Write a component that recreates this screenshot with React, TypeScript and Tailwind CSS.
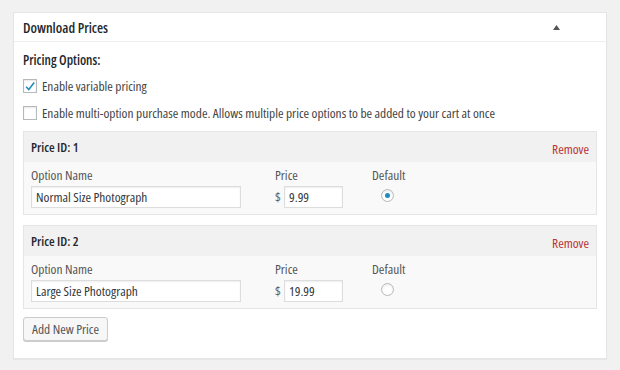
import React from "react"

const prices = [
  { id: 1, name: "Normal Size Photograph", amount: "9.99", isDefault: true },
  { id: 2, name: "Large Size Photograph", amount: "19.99", isDefault: false },
]

const Checkbox = ({ checked }: { checked: boolean }) => (
  <span className="flex h-[14px] w-[14px] shrink-0 items-center justify-center border border-[#b4b9be] bg-white shadow-[inset_0_1px_2px_rgba(0,0,0,0.1)]">
    {checked && (
      <svg width="13" height="13" viewBox="0 0 20 20">
        <path d="M3.5 10.5 L8 15 L17 3.5" fill="none" stroke="#1e8cbe" strokeWidth="2.6" />
      </svg>
    )}
  </span>
)

const PriceRow = ({ id, name, amount, isDefault }: (typeof prices)[number]) => (
  <div className="border border-[#e5e5e5]">
    <div className="flex h-[30px] items-center justify-between bg-[#f1f1f1] px-[7px]">
      <span className="text-[13px] font-semibold text-[#23282d]">Price ID: {id}</span>
      <span className="pt-[3px] text-[#b33]">Remove</span>
    </div>
    <div className="flex h-[52px] bg-[#f9f9f9] px-[7px] pt-[4px] text-[#555]">
      <div className="w-[243px]">
        <div className="h-[20px]">Option Name</div>
        <div className="flex h-[22px] w-[210px] items-center border border-[#ddd] bg-white px-[4px] text-[#32373c] shadow-[inset_0_1px_2px_rgba(0,0,0,0.07)]">
          {name}
        </div>
      </div>
      <div className="w-[98px]">
        <div className="h-[20px] pl-[1px]">Price</div>
        <div className="flex items-center">
          <span className="w-[10px] pl-[1px]">$</span>
          <div className="flex h-[22px] w-[59px] items-center border border-[#ddd] bg-white px-[4px] text-[#32373c] shadow-[inset_0_1px_2px_rgba(0,0,0,0.07)]">
            {amount}
          </div>
        </div>
      </div>
      <div>
        <div className="h-[20px]">Default</div>
        <span className="ml-[9px] mt-[3px] flex h-[13px] w-[13px] items-center justify-center rounded-full border border-[#b4b9be] bg-white shadow-[inset_0_1px_2px_rgba(0,0,0,0.1)]">
          {isDefault && <span className="h-[5px] w-[5px] rounded-full bg-[#1e8cbe]" />}
        </span>
      </div>
    </div>
  </div>
)

export default function App() {
  return (
    <div className="h-[370px] w-[620px] bg-[#f1f1f1] pl-[13px] pt-[12px] font-['Open_Sans',sans-serif] text-[13.4px] leading-[18px] font-stretch-condensed">
      <div className="h-[347px] w-[594px] border border-[#e5e5e5] bg-white shadow-[0_1px_1px_rgba(0,0,0,0.04)]">
        <div className="flex h-[29px] items-center justify-between border-b border-[#eee] pl-[9px] pr-[46px]">
          <span className="pt-[1px] text-[14px] font-semibold text-[#23282d]">Download Prices</span>
          <svg width="7" height="5" viewBox="0 0 7 5">
            <path d="M0 5 L3.5 0 L7 5 Z" fill="#555" />
          </svg>
        </div>
        <div className="px-[9px] pt-[9px] text-[#444]">
          <div className="h-[18px] font-semibold text-[#23282d]">Pricing Options:</div>
          <label className="mt-[10px] flex h-[14px] items-center gap-[5px]">
            <Checkbox checked />
            <span>Enable variable pricing</span>
          </label>
          <label className="mt-[13px] flex h-[14px] items-center gap-[5px]">
            <Checkbox checked={false} />
            <span>Enable multi-option purchase mode. Allows multiple price options to be added to your cart at once</span>
          </label>
          <div className="mt-[11px] flex flex-col gap-[10px]">
            {prices.map((p) => (
              <PriceRow key={p.id} {...p} />
            ))}
          </div>
          <button className="mt-[8px] h-[24px] rounded-[3px] border border-[#ccc] bg-[#f7f7f7] px-[8px] text-[#555] shadow-[0_1px_0_#ccc]">
            Add New Price
          </button>
        </div>
      </div>
    </div>
  )
}
